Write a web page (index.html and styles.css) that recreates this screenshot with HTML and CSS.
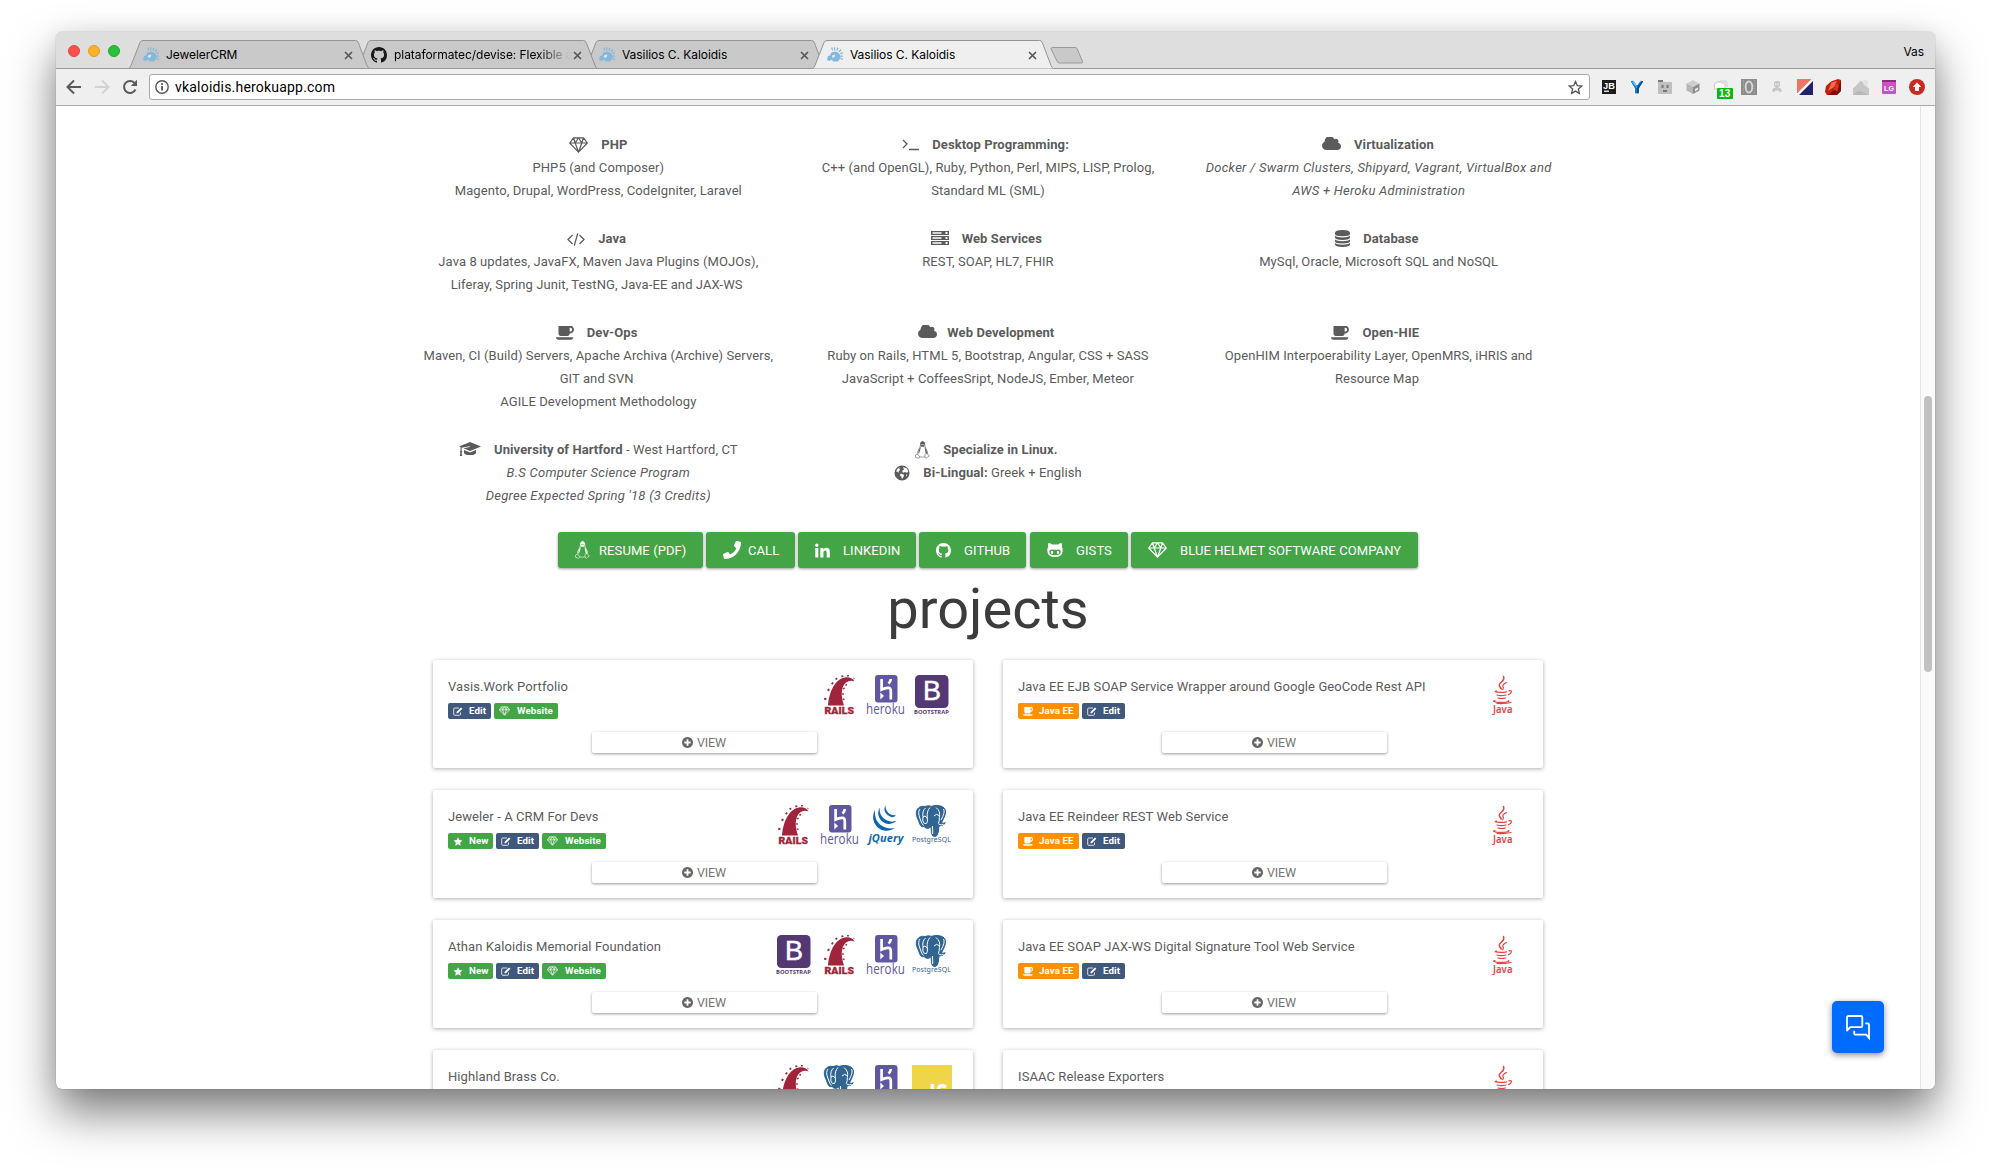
FILE: index.html
```html
<!DOCTYPE html>
<html lang="en">
<head>
<meta charset="utf-8">
<title>Vasilios C. Kaloidis</title>
<link rel="stylesheet" href="styles.css">
</head>
<body>
<svg class="defs" width="0" height="0" aria-hidden="true">
  <defs>
    <symbol id="tab" viewBox="0 0 242 29"><path d="M.5 28.500Q2 28 3 25.500L12 2.500Q13 .5 15 .5H227.500Q229.500 .5 230.300 2.500L239 25.500Q240 28 241.500 28.500" stroke="#939393"/></symbol>
    <symbol id="x" viewBox="0 0 9 9"><path d="M1 1l7 7M8 1L1 8" stroke="#555" stroke-width="1.600" fill="none"/></symbol>
    <symbol id="helmet" viewBox="0 0 16 16"><path fill="#86b7db" d="M4 6q4-3 7.500 0t1.500 6l-2 2.500H6l-1-2-3 1.500-2-1 1-4 2-.5zM4 .5l1 3h1L5.500.5zM7 .5v3h1.200V0zM10 .5L9.500 3.500l1 .5 1-3zM13.500 2l-2 2.500.8.8 2.200-2zM15.500 5l-2.500 1.200.4 1 2.600-.7zM16 8.500h-2.200v1.200H16zM16 11.500l-2.300-.5-.2 1.200 2.500.5z"/><path fill="#e6eef4" d="M5 8.500l3.500-1-1 2.500-2 1z"/></symbol>
    <symbol id="github" viewBox="0 0 16 16"><path d="M8 0C3.580 0 0 3.580 0 8c0 3.540 2.290 6.530 5.470 7.590.4.070.55-.17.55-.38 0-.19-.01-.82-.01-1.490-2.010.37-2.530-.49-2.690-.94-.09-.23-.48-.94-.82-1.130-.28-.15-.68-.52-.01-.53.63-.01 1.080.58 1.230.82.72 1.210 1.870.87 2.330.66.070-.52.28-.87.51-1.070-1.780-.2-3.640-.89-3.640-3.950 0-.87.31-1.590.82-2.150-.08-.2-.36-1.020.08-2.120 0 0 .67-.21 2.200.82.64-.18 1.320-.27 2-.27s1.360.09 2 .27c1.530-1.040 2.200-.82 2.200-.82.44 1.100.16 1.920.08 2.120.51.56.82 1.270.82 2.150 0 3.070-1.870 3.750-3.650 3.950.29.25.54.73.54 1.480 0 1.070-.01 1.930-.01 2.200 0 .21.15.46.55.38A8.010 8.010 0 0 0 16 8c0-4.420-3.580-8-8-8z"/></symbol>
    <symbol id="gem" viewBox="0 0 19 16"><path fill="none" stroke="currentColor" stroke-width="1.200" stroke-linejoin="round" d="M4.500.8h10L18.300 6 9.500 15.200.7 6zM.7 6h17.600M4.500.8L6.200 6l3.300 9.200L12.800 6l1.700-5.200M6.200 6L9.500.8 12.800 6"/></symbol>
    <symbol id="code" viewBox="0 0 18 13"><path fill="none" stroke="currentColor" stroke-width="1.300" d="M5.500 2L1 6.500 5.500 11M12.500 2L17 6.500 12.500 11M10.700.3L7.300 12.700"/></symbol>
    <symbol id="cup" viewBox="0 280 1857 1408" preserveAspectRatio="none"><path d="M1664 640q0-80-56-136t-136-56h-64v384h64q80 0 136-56t56-136zm-1664 768h1792q0 106-75 181t-181 75h-1280q-106 0-181-75t-75-181zm1856-768q0 159-112.500 271.500t-271.500 112.500h-64v32q0 92-66 158t-158 66h-704q-92 0-158-66t-66-158v-736q0-26 19-45t45-19h1152q159 0 271.500 112.500t112.500 271.500z"/></symbol>
    <symbol id="cap" viewBox="0 0 22 15"><path d="M11 0l11 4.500L11 9 4.500 6.300l6.300-1.200-.2-.8-8 1.400v3l.8 1-.8 1 .6 3.300H.8l.6-3.300-.7-1 .8-1V5.100L0 4.500zM5 8l6 2.400L17 8v2.800q-.3 2.300-6 2.300t-6-2.300z"/></symbol>
    <symbol id="term" viewBox="0 0 17 13"><path fill="none" stroke="currentColor" stroke-width="1.300" d="M1 2l4 4-4 4M7 11.500h10"/></symbol>
    <symbol id="server" viewBox="0 0 18 14"><path fill-rule="evenodd" d="M0 0h18v4H0zM0 5h18v4H0zM0 10h18v4H0zM1.500 1.300v1.400h9V1.300zM1.500 6.300v1.400h9V6.300zM1.500 11.300v1.400h9v-1.400zM14.500 1v2h2V1zM14.500 6v2h2V6zM14.500 11v2h2v-2z"/></symbol>
    <symbol id="cloud" viewBox="60 256 1924 1280"><path d="M1984 1152q0 159-112.500 271.500t-271.500 112.500h-1088q-185 0-316.500-131.500t-131.500-316.500q0-132 71-241.500t187-163.500q-2-28-2-43 0-212 150-362t362-150q158 0 286.500 88t187.500 230q70-62 166-62 106 0 181 75t75 181q0 75-41 138 129 30 213 134.500t84 239.500z" transform="translate(0 -20)"/></symbol>
    <symbol id="linux" viewBox="0 0 15 18"><path fill="none" stroke="currentColor" stroke-width=".8" d="M5.400 4.500Q5 .6 7.500.6t2.300 3.900q0 1.500 1.500 3.800 1.700 3 .8 5M5.400 4.500q0 1.800-1.600 3.800-1.500 2.700-.9 4.500"/><path fill="none" stroke="currentColor" stroke-width=".6" d="M2.500 13l2.500 3q-.4 1.500-1.800 1.200L.6 16.300V14zM12.400 13.200l2 1.500-3 2.500q-1.600 0-1.400-2l.2-2.200M5.200 15.800q2.500.8 4.700 0"/><path d="M5.500 3.700h4L9 5.800H6.200zM5.600 1.800Q6.500 0 7.500.2q2 0 2.300 3.100H5.700zM4.200 8.500L5.500 6v2L4 12.500l-.6-.8zM9.500 6l1.800 3 .9 3.500-1.400.5z"/></symbol>
    <symbol id="globe" viewBox="0 0 16 16"><path fill-rule="evenodd" d="M8 .5a7.500 7.500 0 1 0 0 15 7.500 7.500 0 0 0 0-15zM9 2l4 1.500L14.300 7l-2 .8L11 7l-2 .8-1-2 2-1zM6 2.200l-.8 1.600 1 1L4.500 6.500l1 1.500L3 6.500l-1 .3L3.300 4zM7 8.500l3 1.300-.3 2L8 14l-.7-2.200L5.700 10zM12 9.500l1.300.2-1.300 2z"/></symbol>
    <symbol id="db" viewBox="0 0 15 17"><path d="M0 3Q0 0 7.500 0T15 3v1q0 2.200-7.500 2.200T0 4zM0 5.800Q2 7.500 7.500 7.500T15 5.800v1.700q0 2.400-7.500 2.400T0 7.500zM0 9.500q2 1.700 7.500 1.700T15 9.500v1.700q0 2.200-7.500 2.200T0 11.200zM0 13q2 1.700 7.500 1.700T15 13v1.600Q15 17 7.500 17T0 14.600z"/></symbol>
    <symbol id="phone" viewBox="0 0 512 512"><path d="M493.400 24.600l-104-24c-11.300-2.600-22.900 3.300-27.500 13.900l-48 112c-4.200 9.800-1.400 21.300 6.900 28l60.600 49.600c-36 76.700-98.900 140.500-177.200 177.200l-49.600-60.600c-6.800-8.300-18.200-11.100-28-6.900l-112 48C3.900 366.500-2 378.100.6 389.400l24 104C27.100 504.200 36.700 512 48 512c256.100 0 464-207.500 464-464 0-11.200-7.700-20.900-18.600-23.400z"/></symbol>
    <symbol id="linkedin" viewBox="0 0 15 15"><path d="M.3 5h3v9.500h-3zM1.800.5a1.700 1.700 0 1 1 0 3.400 1.700 1.700 0 0 1 0-3.400zM5.300 5h3v1.400Q9.200 4.800 11.300 4.800q3.500 0 3.500 4.200v5.500h-3.100V9.400q0-2-1.500-2-1.800 0-1.800 2.200v4.900H5.300z"/></symbol>
    <symbol id="octo" viewBox="0 0 16 14"><path fill-rule="evenodd" d="M1.500 0Q4 .3 5 1.500h6Q12 .3 14.500 0q.9 2 .3 4Q16 5.500 15.700 8q-.4 6-7.700 6T.3 8Q0 5.500 1.200 4 .6 2 1.500 0zM5 6.500Q2 6.200 2.300 9q.3 3.300 5.700 3.300T13.700 9q.3-2.800-2.700-2.500-3 .5-6 0zM5 7.800q1.200 0 1.200 1.500T5 10.900 3.800 9.300 5 7.800zM11 7.800q1.200 0 1.200 1.500T11 10.900 9.800 9.300 11 7.800z"/></symbol>
    <symbol id="plus" viewBox="128 128 1536 1536"><path d="M1344 960v-128q0-26-19-45t-45-19h-256v-256q0-26-19-45t-45-19h-128q-26 0-45 19t-19 45v256h-256q-26 0-45 19t-19 45v128q0 26 19 45t45 19h256v256q0 26 19 45t45 19h128q26 0 45-19t19-45v-256h256q26 0 45-19t19-45zm320-64q0 209-103 385.500t-279.500 279.500-385.500 103-385.500-103-279.500-279.500-103-385.500 103-385.500 279.500-279.500 385.500-103 385.500 103 279.500 279.500 103 385.500z"/></symbol>
    <symbol id="edit" viewBox="0 0 10 9"><path fill="none" stroke="currentColor" stroke-width=".8" d="M6 1H1.800Q.7 1 .7 2v5.300q0 1 1.100 1h4.700q1 0 1-1V5.500"/><path d="M3.500 4.900L8 .4l1.400 1.400-4.500 4.500H3.500z"/></symbol>
    <symbol id="star" viewBox="0 0 10 10"><path d="M5 .2l1.500 3.100 3.400.5-2.500 2.400.6 3.400L5 8 2 9.600l.6-3.400L.1 3.800l3.400-.5z"/></symbol>
    <symbol id="rails" viewBox="0 0 40 40">
      <path fill="#a0253c" d="M8 30.500C9 18 14.500 3.500 26 2.300q6-.3 8.500 4.200-4.500-2-8.500 1C20.500 12 21 22 24 30.500z"/>
      <path fill="#a0253c" d="M21 .7l2-.5.6 1.600-1.800.6zM27-.2l1.800.2.1 1.600-1.800-.1zM15 3.700l1.500-1.200 1.200 1.400-1.400 1.100zM11 8.700L12.400 7l1.400 1.100-1.300 1.600zM7 15.200l1.300-1.700 1.600 1-1.100 1.800zM4 24.700l.3-2 2.200.3-.2 2.100zM22.500 13l2-.4.3 1.400-2 .5zM25 9.700l1.500-.9.8 1.300-1.300.9zM22 18.200l2 .2v1.400l-2-.2zM22.800 23.200l1.900.6-.4 1.400-1.800-.6zM33 2.500l1.700.9-.7 1.200z"/>
      <text x="4.500" y="39.400" textLength="29.500" lengthAdjust="spacingAndGlyphs" class="logo-rails">RAILS</text>
    </symbol>
    <symbol id="heroku" viewBox="0 0 40 40">
      <rect x="9" y="0" width="22.500" height="27.500" rx="3" fill="#6057a1"/>
      <path fill="none" stroke="#fff" stroke-width="2.700" d="M15.600 4v10.500q4-2 7.200-1.600 2 .4 2 3V24.500M24.800 4q-.2 2.500-2.200 4.700"/><path fill="#fff" d="M14.300 17.500l3.700 3.400-3.700 3.500z"/>
      <text x="0" y="38.600" textLength="39" lengthAdjust="spacingAndGlyphs" class="logo-heroku">heroku</text>
    </symbol>
    <symbol id="bootstrap" viewBox="0 0 40 40">
      <rect x="3" y="0" width="33.500" height="33" rx="4.500" fill="#533874"/>
      <text x="20" y="25" text-anchor="middle" class="logo-b">B</text>
      <text x="2" y="39.400" textLength="35" lengthAdjust="spacingAndGlyphs" class="logo-boot">BOOTSTRAP</text>
    </symbol>
    <symbol id="jquery" viewBox="0 0 40 40">
      <g fill="#0b67ad"><path d="M9 5q-3.500 6.500-.8 12.500 3.500 7.500 11 8.300 5.500.5 10-3-6 1.800-11-.7Q12 19 10 14 8.500 9.500 9 5z"/><path d="M13.700 2.500q-2.800 5.500-.4 10.200 2.500 5 8.700 6.300 4.500.6 8.700-3.200-5 1.800-9.500-.3-5-2.300-6.700-6.500-1.100-3.200-.8-6.500z"/><path d="M19.500.5q-2.200 3.700 0 7.300 2 3.300 5.500 4.300 3 .5 5-1.800-3.500.4-6.300-1.400-4.500-3.200-4.200-8.400z"/></g>
      <text x="2.500" y="36.600" textLength="35" lengthAdjust="spacingAndGlyphs" class="logo-jq">jQuery</text>
    </symbol>
    <symbol id="pg" viewBox="0 0 40 40">
      <path fill="#306491" stroke="#306491" stroke-width="1" d="M5.500 4Q8 .5 13 1.500q3-1.300 6.500-.2Q25-.7 30 1.500q5 2.500 3 8.500-1.500 4.500-3.700 8 3 .5 4-.3-1.500 3.300-6.300 3.300-.5 7.500-2 9.500-2 2-4.500.2-1.600-2-1.300-9-4 3.500-7.200-.2Q8.500 23 6.700 16 2.500 8 5.500 4z"/>
      <path fill="none" stroke="#fff" stroke-width="1" d="M13.500 3Q10 6 11 12l-.2 4q1.200 3.500 3.700 2.500 1.500-2 .8-5.500Q14.500 6 18 2.500M8 4q-2.500 3-.2 9 2 6.500 3.700 7.500M24 2.500q5 4 3.300 10 .3 3.500-1 6M20.500 21q.3 6 .2 8M26.500 19q3 1.500 5 .5M22 11q2.500-3 5-.5M15.300 13q-2.500-3.500-4.300-1M31.500 4q2 3-2.500 11"/>
      <text x="0" y="37.200" textLength="39" lengthAdjust="spacingAndGlyphs" class="logo-pg">PostgreSQL</text>
    </symbol>
    <symbol id="javalogo" viewBox="0 0 40 40">
      <g fill="none" stroke="#e9413f" stroke-linecap="round"><path stroke-width="1.500" d="M21.500 1.500q1.300 3-2.500 6-3 2.500-.7 5l1 1.500"/><path stroke-width="1.200" d="M24.500 7.500q-4.500 2-3.500 4.200 1 1.500-.3 3"/><path stroke-width="1.200" d="M14.500 16q-3 .8 1 1.200 5 .4 9-.4M15 20q4 1.200 9 0M16 23q3.500 1 7.500 0M27 15.800q3-.7 2.300 1.300-.6 1.800-2.800 2.500M13 25.500q-3.500 1 1.500 1.700 7 .6 12-.7 1-.5-.3-1M15 28.500q9 .5 14-1"/></g>
      <text x="11" y="38" textLength="19.500" lengthAdjust="spacingAndGlyphs" class="logo-java">Java</text>
    </symbol>
    <symbol id="js" viewBox="0 0 40 40"><rect width="40" height="40" fill="#efd648"/><text x="17" y="37.500" class="logo-js" textLength="18.500" lengthAdjust="spacingAndGlyphs">JS</text></symbol>
  </defs>
</svg>

<div class="window">
  <div class="tabstrip">
    <div class="lights"><i class="red"></i><i class="yellow"></i><i class="green"></i></div>
    <div class="tabs">
      <div class="tab t1"><svg class="shape"><use href="#tab"/></svg><svg class="fav"><use href="#helmet"/></svg><span class="name">JewelerCRM</span><svg class="close"><use href="#x"/></svg></div>
      <div class="tab t2"><svg class="shape"><use href="#tab"/></svg><svg class="fav gh"><use href="#github"/></svg><span class="name fade">plataformatec/devise: Flexible a</span><svg class="close"><use href="#x"/></svg></div>
      <div class="tab t3"><svg class="shape"><use href="#tab"/></svg><svg class="fav"><use href="#helmet"/></svg><span class="name">Vasilios C. Kaloidis</span><svg class="close"><use href="#x"/></svg></div>
      <div class="tab active"><svg class="shape"><use href="#tab"/></svg><svg class="fav"><use href="#helmet"/></svg><span class="name">Vasilios C. Kaloidis</span><svg class="close"><use href="#x"/></svg></div>
      <svg class="newtab" viewBox="0 0 34 17"><path d="M2.500.5H25q1.500 0 2 1l5.500 13q.5 1.500-1 1.500H9.500q-1.500 0-2-1L1 2Q.7.500 2.500.5z" fill="#c9c9c9" stroke="#999"/></svg>
    </div>
    <span class="user">Vas</span>
  </div>
  <div class="toolbar">
    <svg class="nav" viewBox="0 0 16 16"><path d="M15 8H2M8 1.500L1.500 8 8 14.500" fill="none" stroke="#5a5a5a" stroke-width="2"/></svg>
    <svg class="nav" viewBox="0 0 16 16"><path d="M1 8h13M8 1.500L14.500 8 8 14.500" fill="none" stroke="#d2d2d2" stroke-width="2"/></svg>
    <svg class="nav" viewBox="0 0 16 16"><path d="M13.500 10.500a6 6 0 1 1-1.200-6.800" fill="none" stroke="#5a5a5a" stroke-width="2"/><path d="M15 .8V7H8.800z" fill="#5a5a5a"/></svg>
    <div class="omnibox">
      <svg class="info" viewBox="0 0 14 14"><circle cx="7" cy="7" r="6.200" fill="none" stroke="#555" stroke-width="1.400"/><path d="M6.200 6h1.700v4.500H6.200zM6.200 3.300h1.700v1.600H6.200z" fill="#444"/></svg>
      <span class="url">vkaloidis.herokuapp.com</span>
      <svg class="bookmark" viewBox="0 0 15 15"><path d="M7.500 1.500l1.800 4.100 4.500.4-3.400 3 1 4.400-3.900-2.300-3.900 2.300 1-4.400-3.400-3 4.500-.4z" fill="none" stroke="#555" stroke-width="1.300"/></svg>
    </div>
    <div class="exts">
      <svg viewBox="0 0 16 16"><rect x="1" y="1" width="14" height="14" fill="#1c1c1c"/><text x="2" y="9.500" textLength="12" lengthAdjust="spacingAndGlyphs" class="jb">JB</text><path fill="#ddd" d="M3 11.500h5V13H3z"/></svg>
      <svg viewBox="0 0 16 16"><path d="M1 2q2-2 4.500.5L8 6l2.500-3.500Q13 0 15 2L10.500 9.500V15h-5V9.500z" fill="#1478c8" stroke="#fff"/><path d="M2.500 2.500L8 9l-1.500-5z" fill="#6fc4f6"/><path d="M8 8.500l5-6.500q1 0 1 .5l-4.200 6.500V14H8z" fill="#0d4c96"/></svg>
      <svg viewBox="0 0 16 16"><path fill="#c0c0c0" d="M1 3h14v12H1z"/><path fill="#777" d="M1 1h5v2H1zM4.500 6h2v3h-2zM9.500 6h2v3h-2zM6 11h4v2H6z"/></svg>
      <svg viewBox="0 0 16 16"><path fill="#cfcfcf" d="M8 1l6.500 3.500L8 8 1.500 4.500z"/><path fill="#b5b5b5" d="M1.500 4.500L8 8v7l-6.500-3.500z"/><path fill="#8d8d8d" d="M14.500 4.500L8 8v7l6.500-3.500z"/><path fill="#eee" d="M10 10l3-1.500v2L10 12.500z"/></svg>
      <svg class="wide" viewBox="0 0 20 20"><path d="M1.500 10V4h2l1-1.500h3L8.500 4H12v6z" fill="#fafafa" stroke="#ccc"/><path d="M6 4l1-2h6l1 2v4" fill="none" stroke="#ccc"/><rect x="4" y="9" width="16" height="11" rx="1" fill="#06b90b"/><text x="6" y="18" class="count">13</text></svg>
      <svg viewBox="0 0 16 16"><path fill="#8c8c8c" d="M0 0h16v16H0z"/><ellipse cx="8" cy="8" rx="3.300" ry="5.600" fill="none" stroke="#d5d5d5" stroke-width="2"/><path stroke="#aaa" stroke-dasharray="1 1" d="M2.500 1v14M13.500 1v14"/></svg>
      <svg viewBox="0 0 16 16"><path fill="#c6c6c6" d="M5 3q3-2 6 0v4l-2 1 3.500 2v3h-2l-1-1.500h-3l-1 1.500h-2v-3L7 8 5 7z"/><path fill="#eee" d="M6 4.500h1.500V6H6zM8.500 4.500H10V6H8.500z"/></svg>
      <svg viewBox="0 0 16 16"><path fill="#ee7466" d="M0 0h16L0 16z"/><path fill="#23216c" d="M16 2v14H2z"/><path stroke="#fff" stroke-width="2" d="M.5 15.500l15-15"/></svg>
      <svg viewBox="0 0 16 16"><path fill="#c61c0c" d="M6 2.500L13 0l3 1v11l-4 4H2l-2-3 1-6z"/><path fill="#ef6a57" d="M6.500 3.500L12 2 9 8l-6 4z"/><path fill="#7d0d05" d="M16 2l-4 7-9 7h9l4-4z"/><path fill="#d93221" d="M11 4l3 3-2 6-3-3z"/></svg>
      <svg viewBox="0 0 16 16"><path fill="#c6c6c6" d="M0 9.500L8 1.500l8 8V16H0z"/><path fill="#e2e2e2" d="M10 1h3.500L15 3v6L10 5z"/><path fill="#b7b7b7" d="M0 16l6-4.500L16 16z"/></svg>
      <svg viewBox="0 0 16 16"><rect x="1" y="1" width="14" height="14" rx="1" fill="#cf4fc4"/><path fill="#8c2b86" d="M1 1h14v2H1z"/><text x="3" y="11.500" class="lg" textLength="10" lengthAdjust="spacingAndGlyphs">LG</text></svg>
      <svg viewBox="0 0 16 16"><circle cx="8" cy="8" r="8" fill="#c92a1f"/><path fill="#fff" d="M8 3.500L12.300 8H10v4H6V8H3.700z"/></svg>
    </div>
  </div>

  <div class="viewport">
    <div class="page">
      <div class="skills">
        <div><svg class="i gem"><use href="#gem"/></svg><b>PHP</b><br>PHP5 (and Composer)<br>Magento, Drupal, WordPress, CodeIgniter, Laravel</div>
        <div><svg class="i term"><use href="#term"/></svg><b>Desktop Programming:&nbsp;</b>&#8202;<br>C++ (and OpenGL), Ruby, Python, Perl, MIPS, LISP, Prolog,<br>Standard ML (SML)</div>
        <div><svg class="i cloud"><use href="#cloud"/></svg><b>Virtualization</b>&#8202;<br><em>Docker / Swarm Clusters, Shipyard, Vagrant, VirtualBox and<br>AWS + Heroku Administration</em></div>
        <div><svg class="i code"><use href="#code"/></svg><b>Java</b>&nbsp;<br>Java 8 updates, JavaFX, Maven Java Plugins (MOJOs),<br>Liferay, Spring Junit, TestNG, Java-EE and JAX-WS&nbsp;</div>
        <div><svg class="i server"><use href="#server"/></svg><b>Web Services</b>&nbsp;<br>REST, SOAP, HL7, FHIR</div>
        <div><svg class="i db"><use href="#db"/></svg><b>Database</b>&nbsp;<br>MySql, Oracle, Microsoft SQL and NoSQL</div>
        <div><svg class="i cup"><use href="#cup"/></svg><b>Dev-Ops</b>&nbsp;<br>Maven, CI (Build) Servers, Apache Archiva (Archive) Servers,<br>GIT and SVN&nbsp;<br>AGILE Development Methodology</div>
        <div><svg class="i cloud tight"><use href="#cloud"/></svg><b>Web Development</b>&nbsp;<br>Ruby on Rails, HTML 5, Bootstrap, Angular, CSS + SASS<br>JavaScript + CoffeesSript, NodeJS, Ember, Meteor</div>
        <div><svg class="i cup"><use href="#cup"/></svg><b>Open-HIE</b>&nbsp;&nbsp;<br>OpenHIM Interpoerability Layer, OpenMRS, iHRIS and<br>Resource Map&nbsp;</div>
        <div><svg class="i cap"><use href="#cap"/></svg><b>University of Hartford</b> - West Hartford, CT<br><em>B.S Computer Science Program<br>Degree Expected Spring '18 (3 Credits)</em></div>
        <div><svg class="i linux"><use href="#linux"/></svg><b>Specialize in Linux.</b>&nbsp;<br><svg class="i globe"><use href="#globe"/></svg><b>Bi-Lingual:</b> Greek + English</div>
      </div>

      <div class="links">
        <a class="w1"><svg class="linux"><use href="#linux"/></svg>RESUME (PDF)</a>
        <a class="w2"><svg class="phone"><use href="#phone"/></svg>CALL</a>
        <a class="w3"><svg class="sq"><use href="#linkedin"/></svg>LINKEDIN</a>
        <a class="w4"><svg class="sq"><use href="#github"/></svg>GITHUB</a>
        <a class="w5"><svg class="octo"><use href="#octo"/></svg>GISTS</a>
        <a class="w6"><svg class="gem"><use href="#gem"/></svg>BLUE HELMET SOFTWARE COMPANY</a>
      </div>

      <h1>projects</h1>

      <div class="cards">
        <div class="card"><div class="head"><div><h2>Vasis.Work Portfolio</h2><div class="tags"><span class="edit"><svg><use href="#edit"/></svg>Edit</span><span class="site"><svg><use href="#gem"/></svg>Website</span></div></div><div class="logos"><svg><use href="#rails"/></svg><svg><use href="#heroku"/></svg><svg><use href="#bootstrap"/></svg></div></div><a class="view"><svg><use href="#plus"/></svg>VIEW</a></div>
        <div class="card"><div class="head"><div><h2>Java EE EJB SOAP Service Wrapper around Google GeoCode Rest API</h2><div class="tags"><span class="jee"><svg><use href="#cup"/></svg>Java EE</span><span class="edit"><svg><use href="#edit"/></svg>Edit</span></div></div><div class="logos"><svg><use href="#javalogo"/></svg></div></div><a class="view"><svg><use href="#plus"/></svg>VIEW</a></div>
        <div class="card"><div class="head"><div><h2>Jeweler - A CRM For Devs</h2><div class="tags"><span class="new"><svg><use href="#star"/></svg>New</span><span class="edit"><svg><use href="#edit"/></svg>Edit</span><span class="site"><svg><use href="#gem"/></svg>Website</span></div></div><div class="logos"><svg><use href="#rails"/></svg><svg><use href="#heroku"/></svg><svg><use href="#jquery"/></svg><svg><use href="#pg"/></svg></div></div><a class="view"><svg><use href="#plus"/></svg>VIEW</a></div>
        <div class="card"><div class="head"><div><h2>Java EE Reindeer REST Web Service</h2><div class="tags"><span class="jee"><svg><use href="#cup"/></svg>Java EE</span><span class="edit"><svg><use href="#edit"/></svg>Edit</span></div></div><div class="logos"><svg><use href="#javalogo"/></svg></div></div><a class="view"><svg><use href="#plus"/></svg>VIEW</a></div>
        <div class="card"><div class="head"><div><h2>Athan Kaloidis Memorial Foundation</h2><div class="tags"><span class="new"><svg><use href="#star"/></svg>New</span><span class="edit"><svg><use href="#edit"/></svg>Edit</span><span class="site"><svg><use href="#gem"/></svg>Website</span></div></div><div class="logos"><svg><use href="#bootstrap"/></svg><svg><use href="#rails"/></svg><svg><use href="#heroku"/></svg><svg><use href="#pg"/></svg></div></div><a class="view"><svg><use href="#plus"/></svg>VIEW</a></div>
        <div class="card"><div class="head"><div><h2>Java EE SOAP JAX-WS Digital Signature Tool Web Service</h2><div class="tags"><span class="jee"><svg><use href="#cup"/></svg>Java EE</span><span class="edit"><svg><use href="#edit"/></svg>Edit</span></div></div><div class="logos"><svg><use href="#javalogo"/></svg></div></div><a class="view"><svg><use href="#plus"/></svg>VIEW</a></div>
        <div class="card"><div class="head"><div><h2>Highland Brass Co.</h2></div><div class="logos"><svg><use href="#rails"/></svg><svg><use href="#pg"/></svg><svg><use href="#heroku"/></svg><svg><use href="#js"/></svg></div></div></div>
        <div class="card"><div class="head"><div><h2>ISAAC Release Exporters</h2></div><div class="logos"><svg><use href="#javalogo"/></svg></div></div></div>
      </div>
    </div>
    <div class="scrollbar"><i></i></div>
    <a class="chat"><svg viewBox="0 0 24 24"><path fill="none" stroke="#fff" stroke-width="1.800" stroke-linejoin="round" d="M1 15.500V2.500Q1 1 2.500 1H15q1.300 0 1.300 1.500v8.200q0 1.500-1.300 1.500H4.300z"/><path fill="none" stroke="#fff" stroke-width="1.800" d="M19.300 8.300h2.200q1.500 0 1.500 1.500V23l-2.800-3.300H9.700q-1.500 0-1.500-1.500v-2.400"/></svg></a>
  </div>
</div>
</body>
</html>
```

FILE: styles.css
```css
* { box-sizing: border-box; }
html, body { height: 100%; }
body {
  margin: 0;
  padding: 32px 56px 0;
  height: 1169px;
  overflow: hidden;
  background: #fff;
  font: 13px/23px Roboto, sans-serif;
  letter-spacing: .09px;
  color: #5b5b5b;
}
svg { fill: currentColor; display: block; flex: none; overflow: visible; }
.defs { position: absolute; }

.window {
  width: 1879px;
  height: 1057px;
  display: flex;
  flex-direction: column;
  border-radius: 6px;
  overflow: hidden;
  background: #fff;
  box-shadow: 0 0 1px rgba(0,0,0,.5), 0 24px 46px rgba(0,0,0,.5), 0 0 22px rgba(0,0,0,.08);
}

/* Browser chrome */
.tabstrip {
  height: 37px;
  flex: none;
  display: flex;
  align-items: flex-end;
  background: #dedede;
  border-bottom: 1px solid #999;
  color: #000;
  font: 12px/16px Inter, sans-serif;
  letter-spacing: -.06px;
}
.lights { display: flex; gap: 8px; padding: 0 0 11px 12px; width: 72px; }
.lights i { width: 12px; height: 12px; border-radius: 50%; }
.red { background: #fc4f4b; border: 1px solid #e0443f; }
.yellow { background: #fdb129; border: 1px solid #e09b1d; }
.green { background: #26c33a; border: 1px solid #1daa2b; }
.tabs { display: flex; align-items: flex-end; margin-bottom: -1px; }
.tab {
  position: relative;
  width: 242px;
  height: 29px;
  margin-right: -14px;
  padding: 1px 17px 0 15px;
  display: flex;
  align-items: center;
  color: #000;
}
.shape { position: absolute; left: 0; top: 0; width: 242px; height: 29px; color: #c9c9c9; z-index: 0; }
.t1 { z-index: 3; } .t2 { z-index: 2; } .t3 { z-index: 1; } .active { z-index: 4; }
.tab:not(.active)::after { content: ""; position: absolute; left: 0; right: 0; bottom: 0; border-bottom: 1px solid #999; }
.active .shape { color: #efefef; }
.fav { position: relative; width: 16px; height: 16px; margin-right: 7px; }
.gh { color: #191919; }
.name { position: relative; width: 176px; white-space: nowrap; }
.fade { -webkit-mask: linear-gradient(90deg, #000 82%, transparent 100%); mask: linear-gradient(90deg, #000 82%, transparent 100%); }
.close { position: relative; width: 9px; height: 9px; margin-left: 3px; }
.newtab { width: 34px; height: 17px; margin: 0 0 5px 10px; }
.user { margin-left: auto; padding: 0 11px 8px 0; }

.toolbar {
  height: 37px;
  flex: none;
  display: flex;
  align-items: center;
  background: #efefef;
  border-bottom: 1px solid #aaa;
  padding-left: 10px;
}
.nav { width: 16px; height: 16px; margin-right: 12px; }
.omnibox {
  width: 1441px;
  height: 26px;
  margin-left: -1px;
  display: flex;
  align-items: center;
  padding: 0 6px 0 5px;
  background: #fff;
  border: 1px solid #aaa;
  border-radius: 3px;
  color: #000;
}
.info { width: 14px; height: 14px; margin-right: 6px; }
.url { font: 14px/20px Roboto, sans-serif; letter-spacing: .2px; flex: 1; }
.bookmark { width: 15px; height: 15px; }
.exts { display: flex; align-items: flex-start; gap: 12px; height: 16px; margin-left: 11px; }
.exts svg { width: 16px; height: 16px; }
.exts .wide { width: 20px; height: 20px; margin-right: -4px; }
.jb { font: bold 9px "Liberation Sans", sans-serif; fill: #fff; }
.lg { font: bold 7px "Liberation Sans", sans-serif; fill: #fff; }
.count { font: bold 10px "Liberation Sans", sans-serif; fill: #fff; }

/* Page */
.viewport { position: relative; flex: 1; min-height: 0; display: flex; overflow: hidden; }
.page { flex: 1; padding: 27px 0 0 346px; }
.scrollbar { width: 15px; background: #fafafa; border-left: 1px solid #e4e4e4; padding: 290px 0 0 3px; }
.scrollbar i { display: block; width: 8px; height: 276px; border-radius: 4px; background: #c1c1c1; }

.skills {
  width: 1172px;
  display: grid;
  grid-template-columns: repeat(3, 1fr);
  row-gap: 25px;
  text-align: center;
  white-space: nowrap;
}
.skills > :nth-child(3n+1) { padding-left: 2px; }
.skills em { letter-spacing: .26px; }
.i { display: inline-block; margin-right: 13px; vertical-align: -2px; }
.gem { width: 19px; height: 16px; }
.i.gem { vertical-align: -4px; }
.term { width: 17px; height: 13px; }
.i.term { vertical-align: -2px; }
.cloud { width: 19px; height: 14px; vertical-align: -2px; }
.tight { margin-right: 10px; }
.code { width: 18px; height: 13px; vertical-align: -3px; }
.server { width: 18px; height: 14px; vertical-align: -2px; }
.db { width: 15px; height: 17px; vertical-align: -4px; }
.cup { width: 18px; height: 14px; vertical-align: -3px; }
.cap { width: 22px; height: 15px; vertical-align: -3px; }
.linux { width: 15px; height: 18px; }
.i.linux { vertical-align: -5px; }
.globe { width: 16px; height: 16px; vertical-align: -4px; }

.links { display: flex; gap: 3px; margin: 25px 0 0 156px; }
.links a {
  height: 36px;
  padding-left: 17px;
  display: flex;
  align-items: center;
  gap: 13px;
  background: #43a546;
  color: #fff;
  border-radius: 3px;
  box-shadow: 0 1px 3px rgba(0,0,0,.4);
  white-space: nowrap;
}
.links .w1 { width: 145px; gap: 9px; }
.links .w2 { width: 89px; gap: 7px; }
.w3 { width: 118px; }
.w4 { width: 107px; }
.links .w5 { width: 98px; margin-left: 1px; }
.w6 { width: 287px; }
.phone { width: 18px; height: 18px; }
.sq { width: 15px; height: 15px; }
.octo { width: 16px; height: 14px; }

h1 { width: 1172px; margin: 8px 0 0; text-align: center; font-size: 56px; line-height: 66px; font-weight: 400; letter-spacing: 0; color: #3c3c3c; }

.cards { display: grid; grid-template-columns: 540px 540px; gap: 22px 30px; margin: 18px 0 0 31px; }
.card {
  height: 108px;
  padding: 15px 21px 0 15px;
  border-radius: 2px;
  box-shadow: 0 1px 4px rgba(0,0,0,.32);
}
.head { display: flex; justify-content: space-between; height: 57px; }
h2 { margin: 0; font-size: 13px; line-height: 23px; font-weight: 400; }
.tags { display: flex; gap: 3px; margin-top: 5px; }
.tags span {
  height: 16px;
  padding: 0 5px;
  display: flex;
  align-items: center;
  gap: 6px;
  border-radius: 2px;
  color: #fff;
  font-size: 9.75px;
  font-weight: 700;
  line-height: 16px;
}
.tags svg { width: 10px; height: 9px; }
.tags .site svg { width: 11px; height: 10px; }
.tags .site { width: 64px; gap: 7px; }
.tags .edit { width: 43px; }
.tags .new { width: 45px; }
.edit { background: #41587d; }
.site, .new { background: #43a546; }
.tags .jee { background: #ff9100; width: 61px; }
.logos { display: flex; gap: 6px; }
.logos svg { width: 40px; height: 40px; }
.view {
  width: 225px;
  height: 21px;
  margin: 0 auto;
  position: relative;
  left: 4px;
  display: flex;
  align-items: center;
  justify-content: center;
  gap: 4px;
  border-radius: 2px;
  box-shadow: 0 1px 3px rgba(0,0,0,.4);
  font-size: 12.500px;
  letter-spacing: -.2px;
  color: #757575;
}
.view svg { width: 11px; height: 11px; color: #666; }

.logo-rails { font: 900 9.500px Roboto, sans-serif; fill: #a0253c; stroke: #a0253c; stroke-width: .3; }
.logo-heroku { font: 14.500px "Open Sans", sans-serif; fill: #6057a1; }
.logo-b { font: 27px "Liberation Sans", sans-serif; fill: #fff; stroke: #fff; stroke-width: .5; letter-spacing: 0; }
.logo-boot { font: 700 5.500px "Open Sans", sans-serif; fill: #533874; }
.logo-jq { font: italic 700 11px "Open Sans", sans-serif; fill: #0b67ad; }
.logo-pg { font: 7.500px "Noto Sans", sans-serif; fill: #306491; }
.logo-java { font: 600 11px "Noto Sans", sans-serif; fill: #e9413f; }
.logo-js { font: 700 26px "Open Sans", sans-serif; fill: #fff; }

.chat {
  position: absolute;
  right: 51px;
  bottom: 36px;
  width: 52px;
  height: 52px;
  display: flex;
  align-items: center;
  justify-content: center;
  background: #006bff;
  border-radius: 5px;
  box-shadow: 0 2px 6px rgba(0,0,0,.45);
}
.chat svg { width: 24px; height: 24px; }
```
